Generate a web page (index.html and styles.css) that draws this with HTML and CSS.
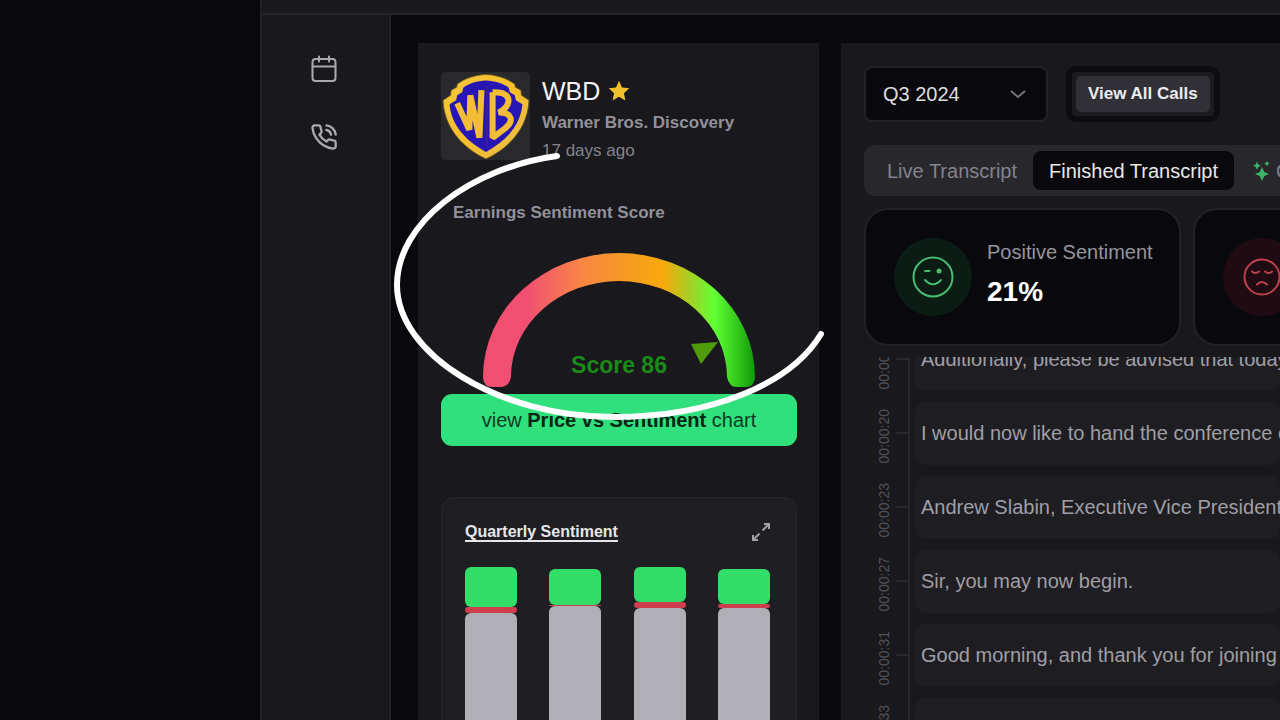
FILE: index.html
```html
<!DOCTYPE html>
<html lang="en">
<head>
<meta charset="utf-8">
<title>WBD – Earnings call</title>
<link rel="stylesheet" href="styles.css">
</head>
<body>
<div class="app">
  <header class="topbar"></header>
  <div class="body">
    <nav class="sidebar" aria-label="Main">
      <a class="nav-link" href="#calendar" aria-label="Calendar">
        <svg class="nav-icon" viewBox="0 0 28 28"><rect x="2.500" y="4" width="23" height="22" rx="3"/><path d="M2.500 11.500h23M9 1.500v5M19 1.500v5"/></svg>
      </a>
      <a class="nav-link" href="#calls" aria-label="Calls">
        <svg class="nav-icon" viewBox="0 0 24 24"><path d="M22 16.920v3a2 2 0 0 1-2.180 2 19.790 19.790 0 0 1-8.630-3.070 19.500 19.500 0 0 1-6-6 19.790 19.790 0 0 1-3.070-8.670A2 2 0 0 1 4.110 2h3a2 2 0 0 1 2 1.720c.127.960.361 1.903.7 2.810a2 2 0 0 1-.450 2.110L8.090 9.910a16 16 0 0 0 6 6l1.270-1.270a2 2 0 0 1 2.110-.450c.907.339 1.850.573 2.810.7A2 2 0 0 1 22 16.920zM14.050 2a9 9 0 0 1 8 7.940M14.050 6A5 5 0 0 1 18 10"/></svg>
      </a>
    </nav>
    <main class="main">
      <section class="company">
        <div class="company-head">
          <div class="logo">
            <svg viewBox="0 0 88 88" role="img" aria-label="Warner Bros. logo">
              <defs><linearGradient id="gold" x1="0" y1="0" x2="1" y2="1"><stop offset="0" stop-color="#f0c93c"/><stop offset=".5" stop-color="#f7bd2d"/><stop offset="1" stop-color="#e3bd4e"/></linearGradient></defs>
              <path d="M44.500 2.500C55 3 65 6 73 12L73.500 15L79 18L79.500 23L87 28C86 53 70 74 44.500 86C19 74 3 53 2 28L9.500 23L10 18L15.500 15L16 12C24 6 34 3 44.500 2.500Z" fill="url(#gold)" stroke="#6d5417" stroke-width=".8"/>
              <path d="M44.500 8.500C53 9 61 11 67 15.500L68 20L73 23L74 28L80.500 32C79 52 65 68 44.500 79C24 68 10 52 8.500 32L15 28L16 23L21 20L22 15.500C28 11 36 9 44.500 8.500Z" fill="#2716b4"/>
              <path d="M45.500 14V74" stroke="#4e1c80" stroke-width="1.500"/>
              <path d="M16 31L28 57L29 23L38 65L40 18" fill="none" stroke="#f3bd35" stroke-width="6" stroke-linejoin="bevel"/>
              <path d="M51 20V65L63 56C73 48 70 40 57 40C68 35 70 25 61 21Q57 20 51 20" fill="none" stroke="#f3bd35" stroke-width="6" stroke-linejoin="bevel"/>
            </svg>
          </div>
          <div class="company-text">
            <h1 class="ticker">WBD
              <svg class="star" viewBox="0 0 22 22"><path d="M11 .8l3 6.700 7.300.8-5.400 4.900 1.500 7.200L11 16.700l-6.400 3.700 1.500-7.200L.7 8.300 8 7.500z"/></svg>
            </h1>
            <p class="company-name">Warner Bros. Discovery</p>
            <p class="company-age">17 days ago</p>
          </div>
        </div>
        <h2 class="score-title">Earnings Sentiment Score</h2>
        <div class="gauge">
          <svg viewBox="0 0 356 155" role="img" aria-label="Score 86">
            <defs>
              <linearGradient id="scale" gradientUnits="userSpaceOnUse" x1="42" y1="0" x2="314" y2="0">
                <stop offset=".16" stop-color="#f14f71"/><stop offset=".36" stop-color="#f98545"/><stop offset=".52" stop-color="#f69a24"/><stop offset=".66" stop-color="#f9a80c"/><stop offset=".76" stop-color="#a5d024"/><stop offset=".85" stop-color="#62ff35"/><stop offset=".91" stop-color="#40d922"/><stop offset="1" stop-color="#0f9a0a"/>
              </linearGradient>
            </defs>
            <path d="M42 138A136 124 0 0 1 314 138Q314 148 304 148H296Q288 148 286 138A108 96 0 0 0 70 138Q68 148 60 148H52Q42 148 42 138Z" fill="url(#scale)"/>
            <path d="M250 105L277 103L260 125Z" fill="#509b0c"/>
            <text class="gauge-text" x="178" y="134" text-anchor="middle">Score 86</text>
          </svg>
        </div>
        <button class="chart-button" type="button">view <strong>Price vs Sentiment</strong> chart</button>
        <section class="quarterly">
          <div class="quarterly-head">
            <h2 class="quarterly-title">Quarterly Sentiment</h2>
            <button class="expand" type="button" aria-label="Expand">
              <svg viewBox="0 0 18 18"><path d="M12 1h5v5M17 1l-6.500 6.500M7.500 10.500L1 17M1 12v5h5"/></svg>
            </button>
          </div>
          <div class="bars">
            <div class="bar"><i class="pos" style="height:40px"></i><i class="neg" style="height:6px"></i><i class="neu"></i></div>
            <div class="bar low"><i class="pos" style="height:36px"></i><i class="neg" style="height:1px"></i><i class="neu"></i></div>
            <div class="bar"><i class="pos" style="height:35px"></i><i class="neg" style="height:6px"></i><i class="neu"></i></div>
            <div class="bar low"><i class="pos" style="height:35px"></i><i class="neg" style="height:4px"></i><i class="neu"></i></div>
          </div>
        </section>
      </section>

      <section class="call">
        <div class="toolbar">
          <div class="select-wrap">
            <select class="quarter" aria-label="Quarter"><option>Q3 2024</option></select>
            <svg class="chevron" viewBox="0 0 16 16"><path d="M1 5l7 6 7-6"/></svg>
          </div>
          <div class="calls-frame"><button class="calls-button" type="button">View All Calls</button></div>
        </div>
        <div class="tabs" role="tablist">
          <button class="tab" role="tab" type="button">Live Transcript</button>
          <button class="tab active" role="tab" type="button" aria-selected="true">Finished Transcript</button>
          <button class="tab" role="tab" type="button">
            <svg class="spark" viewBox="0 0 18 20"><path d="M9 6l2.200 5L16 13l-4.800 2L9 20l-2.200-5L2 13l4.800-2zM4 .5l1.200 3L8 4.800 5.200 6 4 9 2.800 6 0 4.800l2.800-1.300zM14 0l.9 1.800 1.900.8-1.900.9L14 5.500l-.9-2-1.900-.9 1.900-.8z"/></svg>
            Chat
          </button>
        </div>
        <div class="stats">
          <article class="stat">
            <div class="badge good">
              <svg viewBox="0 0 42 42"><circle cx="21" cy="21" r="19.500"/><path d="M13 15h4.500M13 24q8 8.500 16 0"/><circle class="eye" cx="27" cy="15" r="2.500"/></svg>
            </div>
            <div class="stat-text"><p class="stat-name">Positive Sentiment</p><p class="stat-value">21%</p></div>
          </article>
          <article class="stat">
            <div class="badge bad">
              <svg viewBox="0 0 42 42"><circle cx="21" cy="21" r="17.500"/><path d="M11 15.500q3.500 3 7 0M24 15.500q3.500 3 7 0M16 28.500q5-5 10 0"/></svg>
            </div>
            <div class="stat-text"><p class="stat-name">Negative Sentiment</p><p class="stat-value">3%</p></div>
          </article>
        </div>
        <ol class="transcript">
          <li class="line"><time class="time">00:00:16</time><p class="speech">Additionally, please be advised that today's call is being recorded.</p></li>
          <li class="line"><time class="time">00:00:20</time><p class="speech">I would now like to hand the conference over to</p></li>
          <li class="line"><time class="time">00:00:23</time><p class="speech">Andrew Slabin, Executive Vice President, Global Investor Strategy.</p></li>
          <li class="line"><time class="time">00:00:27</time><p class="speech">Sir, you may now begin.</p></li>
          <li class="line"><time class="time">00:00:31</time><p class="speech">Good morning, and thank you for joining us</p></li>
          <li class="line"><time class="time">00:00:33</time><p class="speech">Discovery's Q3 earnings call.</p></li>
        </ol>
      </section>
    </main>
  </div>
</div>
<svg class="marker" viewBox="0 0 440 280" aria-hidden="true"><path d="M167 16C80 28 7 83 7 145C7 214 108 277 224 277C322 277 401 244 431 194"/></svg>
</body>
</html>
```

FILE: styles.css
```css
* { box-sizing: border-box; }
body {
  margin: 0;
  height: 100vh;
  overflow: hidden;
  background: #09080c;
  color: #a1a0a8;
  font-family: "Liberation Sans", Arial, sans-serif;
  font-size: 20px;
  line-height: 24px;
}
h1, h2, p, ol { margin: 0; padding: 0; }
button, select { font: inherit; color: inherit; border: 0; padding: 0; background: none; }
svg { display: block; }

.app {
  height: 100%;
  margin-left: 260px;
  display: flex;
  flex-direction: column;
  border-left: 2px solid #222126;
}
.topbar { flex: none; height: 15px; background: #19181c; border-bottom: 2px solid #252429; }
.body { flex: 1; min-height: 0; display: flex; }
.sidebar {
  flex: none;
  width: 129px;
  padding: 40px 4px 0 0;
  display: flex;
  flex-direction: column;
  align-items: center;
  gap: 40px;
  background: #19181c;
  border-right: 2px solid #242328;
}
.nav-icon { width: 28px; height: 28px; fill: none; stroke: #aaa9b0; stroke-width: 2; stroke-linecap: round; stroke-linejoin: round; }
.main { flex: 1; min-width: 0; display: flex; gap: 22px; padding: 28px 0 0 27px; }

.company { flex: none; width: 401px; padding: 29px 22px 0 23px; background: #19181c; overflow: hidden; }
.company-head { display: flex; gap: 12px; }
.logo { width: 89px; height: 88px; border-radius: 5px; background: #29282c; }
.company-text { display: flex; flex-direction: column; gap: 4px; padding-top: 3px; }
.ticker { display: flex; align-items: center; gap: 8px; font-size: 25px; line-height: 32px; font-weight: 400; color: #f4f4f6; }
.star { width: 22px; height: 22px; fill: #f2c02d; }
.company-name { font-size: 17px; font-weight: 700; color: #92919a; }
.company-age { font-size: 17px; color: #85848d; }
.score-title { margin: 38px 12px 0; font-size: 17px; font-weight: 700; color: #92919a; }
.gauge { margin-top: 14px; }
.gauge-text { font-size: 23px; font-weight: 700; fill: #1a8a18; }
.chart-button { width: 100%; height: 52px; border-radius: 11px; background: #2fe07d; color: #0c3a22; }
.chart-button strong { color: #062513; }

.quarterly { margin-top: 51px; height: 400px; padding: 22px 26px 0 23px; border: 1px solid #27262b; border-radius: 13px; background: #1f1e22; }
.quarterly-head { display: flex; justify-content: space-between; align-items: center; }
.quarterly-title { font-size: 16px; color: #e6e6ea; text-decoration: underline; text-decoration-thickness: 2px; text-underline-offset: 3px; }
.expand svg { width: 18px; height: 18px; fill: none; stroke: #a09fa7; stroke-width: 2; }
.bars { display: flex; justify-content: space-between; margin-top: 23px; height: 300px; }
.bar { width: 52px; display: flex; flex-direction: column; }
.bar.low { padding-top: 2px; }
.pos { border-radius: 6px; background: #32de67; }
.neg { border-radius: 3px; background: #cf3e4d; }
.neu { flex: 1; border-radius: 6px; background: #b0afb6; }

.call { flex: 1; min-width: 0; display: flex; flex-direction: column; padding: 23px 0 0 23px; background: #19181c; overflow: hidden; }
.toolbar { display: flex; gap: 18px; }
.select-wrap { position: relative; width: 184px; height: 56px; }
.quarter { appearance: none; width: 100%; height: 100%; padding: 0 17px; border: 2px solid #232227; border-radius: 8px; background: #09080c; color: #dededf; }
.chevron { position: absolute; right: 22px; top: 20px; width: 16px; height: 16px; fill: none; stroke: #76757c; stroke-width: 2; pointer-events: none; }
.calls-frame { height: 56px; padding: 4px; border: 6px solid #0d0c10; border-radius: 10px; background: #1c1b20; }
.calls-button { height: 100%; padding: 0 12px; border-radius: 5px; background: #313036; color: #ececef; font-size: 17px; font-weight: 700; }
.tabs { flex: none; display: flex; margin-top: 23px; padding: 6px 7px; width: 700px; border-radius: 11px; background: #28272c; }
.tab { flex: none; display: flex; align-items: center; gap: 5px; height: 39px; padding: 0 16px; border-radius: 8px; color: #84838b; }
.tab:last-child { padding-left: 19px; }
.tab.active { background: #09080c; color: #e8e8eb; }
.spark { width: 18px; height: 20px; fill: #3bb568; }
.stats { flex: none; display: flex; gap: 12px; margin-top: 12px; }
.stat { flex: none; width: 317px; height: 138px; display: flex; align-items: center; gap: 15px; padding: 0 28px; border: 2px solid #222126; border-radius: 24px; background: #09080c; }
.badge { flex: none; width: 78px; height: 78px; padding: 18px; border-radius: 50%; }
.badge svg { fill: none; stroke-width: 2; stroke-linecap: round; }
.good { background: #0a1c14; }
.good svg { stroke: #48bd70; }
.good .eye { fill: #48bd70; stroke: none; }
.bad { background: #1f0b11; }
.bad svg { stroke: #bd4150; }
.stat-text { display: flex; flex-direction: column; gap: 12px; padding-bottom: 7px; }
.stat-name { white-space: nowrap; color: #96959d; }
.stat-value { font-size: 28px; line-height: 32px; font-weight: 700; color: #fff; }

.transcript { flex: 1; min-height: 0; margin-top: 11px; overflow: hidden; list-style: none; }
.line { display: grid; grid-template-columns: 32px 14px 1fr; align-items: center; height: 74px; }
.line:first-child { margin-top: -35px; }
.time { grid-column: 1; grid-row: 1; justify-self: end; writing-mode: vertical-rl; transform: rotate(180deg); margin-right: 3px; padding-bottom: 7px; line-height: 18px; font-size: 14px; color: #525158; }
.line::before { content: ""; grid-column: 2; grid-row: 1; align-self: stretch; border-right: 2px solid #28272c; background: linear-gradient(#28272c, #28272c) center / 100% 2px no-repeat; }
.line:first-child::before { margin-top: 36px; background-position: top; }
.speech { grid-column: 3; grid-row: 1; margin-left: 5px; padding: 19px 6px; height: 63px; border-radius: 10px; background: #1e1d21; color: #a09fa6; white-space: nowrap; overflow: hidden; }

.marker { position: absolute; left: 390px; top: 140px; width: 440px; height: 280px; overflow: visible; fill: none; stroke: #fff; stroke-width: 6; stroke-linecap: round; pointer-events: none; }
```
